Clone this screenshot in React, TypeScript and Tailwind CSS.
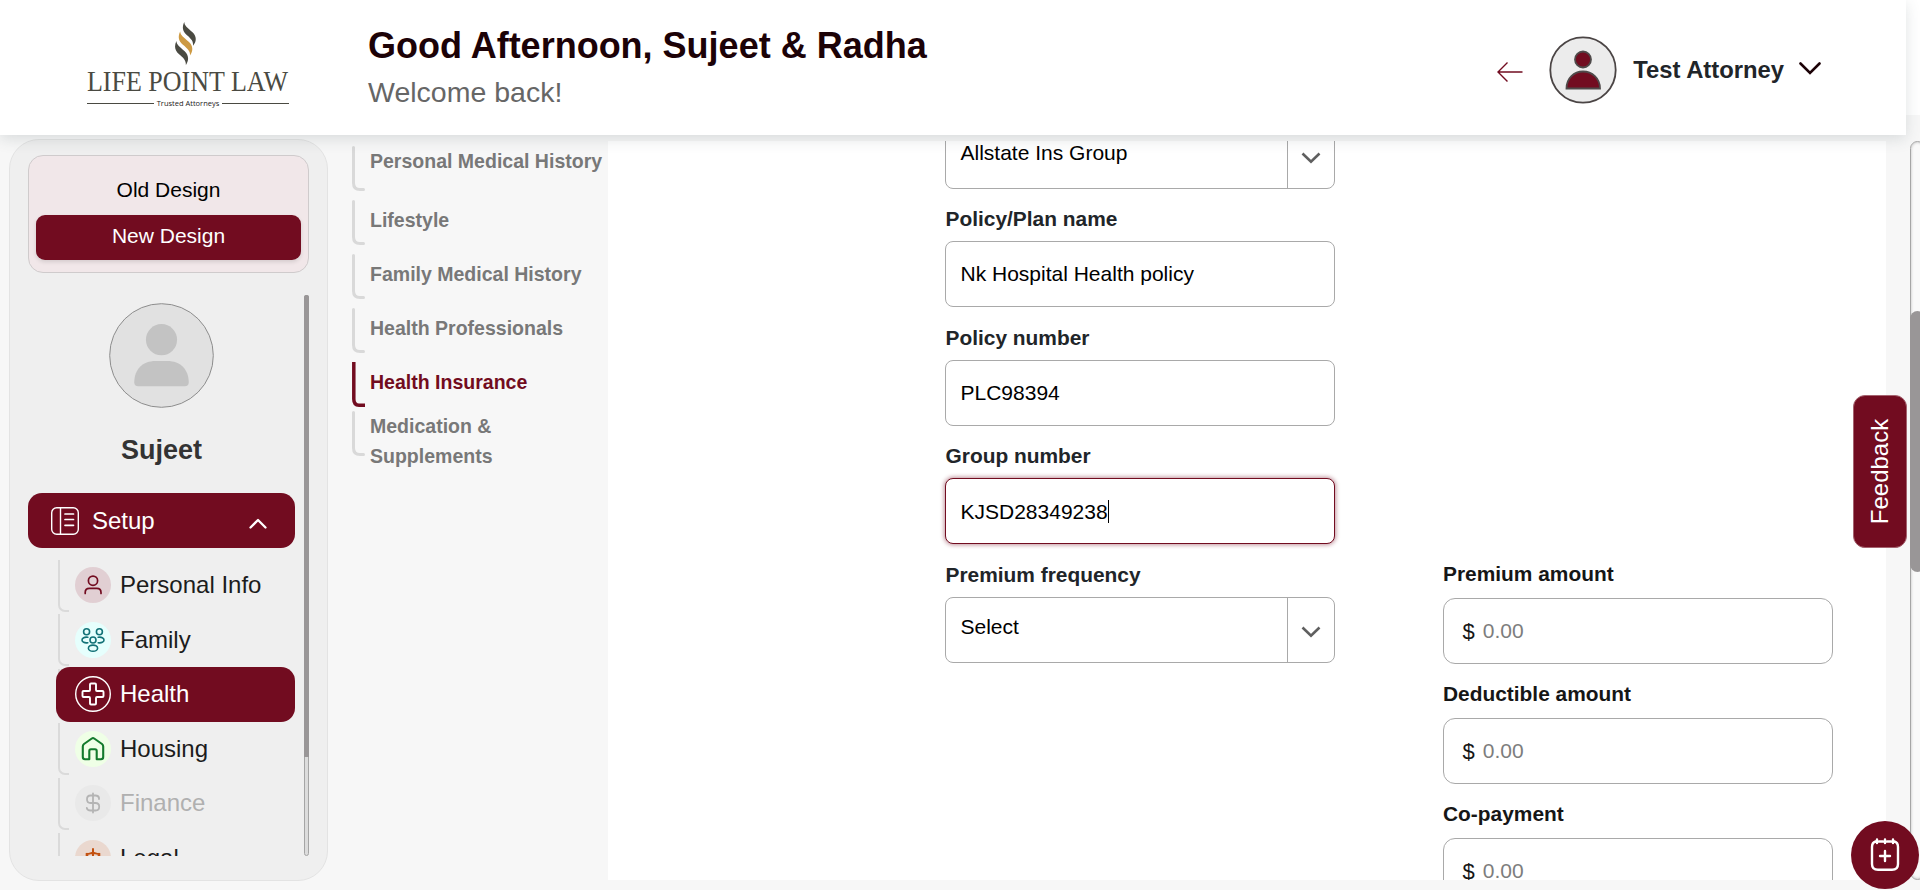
import React from "react";

function Flame() {
  return (
    <svg width="22" height="44" viewBox="0 0 22 44" className="block">
      <path d="M9.300 0C6.800 5 7.500 9.500 12 13.200C16.500 17 18.500 19.500 18 23.800C21.800 19.500 21.800 14.500 17.500 10.300C12.500 5.800 9.600 4 9.300 0Z" fill="#4a4a42" />
      <path d="M5.200 9.500C2.700 14.500 3.400 19 7.900 22.700C12.400 26.500 15.500 29 15 33.500C18.300 29 18.300 24 13.700 19.800C8.700 15.300 5.500 13.500 5.200 9.500Z" fill="#cd9a43" />
      <path d="M1.400 19C-0.900 24 -0.400 28.500 4.100 32.200C8.600 36 11.300 38.500 10.800 43.200C14 38.500 14 33.500 9.700 29.300C4.700 24.800 1.700 23 1.400 19Z" fill="#4a4a42" />
    </svg>
  );
}

function Logo() {
  return (
    <div className="mt-[22px] ml-[87px] flex w-[202px] shrink-0 flex-col items-center">
      <div className="pr-[4px]">
        <Flame />
      </div>
      <svg width="204" height="28" viewBox="0 0 204 28" className="block overflow-visible">
        <text x="1" y="24.500" textLength="201" lengthAdjust="spacingAndGlyphs" fontFamily="Liberation Serif" fontSize="28.500" fill="#4a4a42">LIFE POINT LAW</text>
      </svg>
      <div className="mt-[3px] flex w-full items-center justify-between">
        <span className="h-px w-[67px] bg-[#4a4a42]" />
        <span className="font-['Open_Sans',sans-serif] text-[7.500px] leading-3 text-[#222]">Trusted Attorneys</span>
        <span className="h-px w-[67px] bg-[#4a4a42]" />
      </div>
    </div>
  );
}

function Header() {
  return (
    <header className="relative z-10 flex h-[135px] w-[1906px] shrink-0 bg-white shadow-[0_4px_14px_rgba(60,80,90,0.16)]">
      <Logo />
      <div className="ml-[79px] flex flex-1 flex-col pt-[25px]">
        <h1 className="text-[36px] leading-[42px] font-bold text-[#1c0207]">Good Afternoon, Sujeet &amp; Radha</h1>
        <p className="mt-[9px] text-[28.500px] leading-8 text-[#666]">Welcome back!</p>
      </div>
      <div className="flex h-[140px] items-center pr-[85px]">
        <svg width="26" height="20" viewBox="0 0 26 20" fill="none" stroke="#720c20" strokeWidth="1.400" className="mt-[4px]">
          <path d="M25.500 10H1M10.500 0.500L1 10L10.500 19.500" />
        </svg>
        <svg width="68" height="68" viewBox="0 0 68 68" className="ml-[26px]">
          <circle cx="34" cy="34" r="32.700" fill="#ececec" stroke="#4b4545" strokeWidth="1.800" />
          <circle cx="34" cy="23.500" r="8" fill="#720c20" stroke="#4f4a4a" strokeWidth="1.800" />
          <path d="M17.500 52.500C17.500 42 25 35.500 34 35.500S51 42 51 52.500Z" fill="#720c20" stroke="#4f4a4a" strokeWidth="1.800" />
        </svg>
        <span className="ml-4 text-[23.800px] leading-7 font-bold text-[#212529]">Test Attorney</span>
        <svg width="22" height="13" viewBox="0 0 22 13" fill="none" stroke="#1c0207" strokeWidth="2.600" strokeLinecap="round" className="-mt-[3px] ml-[15px]">
          <path d="M1.500 1.500L11 11L20.500 1.500" />
        </svg>
      </div>
    </header>
  );
}

const icons: Record<string, React.ReactNode> = {
  person: (
    <g stroke="#720c20" strokeWidth="1.700" strokeLinecap="round">
      <circle cx="18" cy="13.700" r="4.600" />
      <path d="M10.200 26.500V25.500Q10.200 21.300 14.400 21.300H21.800Q26 21.300 26 25.500V26.500" />
    </g>
  ),
  family: (
    <g stroke="#127277" strokeWidth="1.600" strokeLinecap="round">
      <circle cx="11.600" cy="9.800" r="3" />
      <circle cx="24.400" cy="9.800" r="3" />
      <circle cx="18" cy="18" r="3" />
      <ellipse cx="18" cy="26.200" rx="4.600" ry="3.100" />
      <path d="M12.800 15.300C9.500 14.700 7 16 7 18S9.500 21.300 12.800 20.700M23.200 15.300C26.500 14.700 29 16 29 18S26.500 21.300 23.200 20.700" />
    </g>
  ),
  health: (
    <g stroke="#fff">
      <circle cx="18" cy="18" r="17.300" strokeWidth="1.400" />
      <path strokeWidth="1.900" strokeLinejoin="round" d="M15 8.500Q15 7.500 16 7.500H20Q21 7.500 21 8.500V14Q21 15 22 15H27.500Q28.500 15 28.500 16V20Q28.500 21 27.500 21H22Q21 21 21 22V27.500Q21 28.500 20 28.500H16Q15 28.500 15 27.500V22Q15 21 14 21H8.500Q7.500 21 7.500 20V16Q7.500 15 8.500 15H14Q15 15 15 14Z" />
    </g>
  ),
  house: (
    <path stroke="#137a2c" strokeWidth="2.100" strokeLinejoin="round" d="M7.800 15.500Q7.800 14 9 13L16.800 7.500Q18 6.700 19.200 7.500L27 13Q28.200 14 28.200 15.500V26Q28.200 28.200 26 28.200H21.700V20Q21.700 18.300 20 18.300H16Q14.300 18.300 14.300 20V28.200H10Q7.800 28.200 7.800 26Z" />
  ),
  dollar: (
    <path stroke="#b4b4b4" strokeWidth="1.800" strokeLinecap="round" d="M18 8.500V27.500M24 14V13Q23.500 10.500 20.500 10.500H15.500Q12 10.500 12 14.200T15.500 18H20.500Q24.200 18 24.200 21.700T20.500 25.500H15.500Q12.200 25.500 11.800 22.800" />
  ),
  legal: (
    <path stroke="#c2500f" strokeWidth="2" strokeLinecap="round" d="M18 9V27M11.500 14C14 14.300 16 12.800 18 12.800S22 14.300 24.500 14M12 15L9 22H15ZM24 15L21 22H27Z" />
  ),
};

function NavItem({ icon, label, circle, active, muted }: { icon: string; label: string; circle: string; active?: boolean; muted?: boolean }) {
  return (
    <div className="flex h-[54.600px] shrink-0">
      <span className="mt-[2px] -mr-[13px] ml-[2px] h-[52px] w-[11px] shrink-0 rounded-bl-[7px] border-b-2 border-l-2 border-[#dadada]" />
      <div className={`relative flex h-[55px] w-[239px] items-center rounded-[14px] pl-[19px] ${active ? "bg-[#720c20]" : ""}`}>
        <span className={`size-9 rounded-full ${circle}`}>
          <svg width="36" height="36" viewBox="0 0 36 36" fill="none">{icons[icon]}</svg>
        </span>
        <span className={`ml-[9px] text-[24px] leading-7 ${active ? "text-white" : muted ? "text-[#b0b0b0]" : "text-[#1c1c1c]"}`}>{label}</span>
      </div>
    </div>
  );
}

function Sidebar() {
  return (
    <aside className="mt-1 ml-[9px] flex h-[742px] w-[319px] shrink-0 flex-col rounded-[30px] border border-[#e3e3e3] bg-[#efefef] pt-[15px] pl-[18px]">
      <div className="flex h-[118px] w-[281px] shrink-0 flex-col items-center rounded-[15px] border border-[#cfcbcc] bg-[#f1e7e9] pt-[14px] text-[21px]">
        <div className="flex h-[45px] w-[265px] items-center justify-center pb-[6px] text-black">Old Design</div>
        <div className="flex h-[45px] w-[265px] items-center justify-center rounded-[9px] bg-[#720c20] pb-[4px] text-white shadow-[0_2px_4px_rgba(0,0,0,0.12)]">New Design</div>
      </div>
      <div className="mt-[22px] flex h-[561px]">
        <div className="flex h-[561px] w-[267px] flex-col overflow-hidden">
          <svg width="105" height="105" viewBox="0 0 106 106" className="mt-2 mr-px shrink-0 self-center">
            <circle cx="53" cy="53" r="52.300" fill="#e1e1e1" stroke="#8c8c8c" />
            <circle cx="53" cy="37" r="15.700" fill="#c3c3c3" />
            <path d="M25.500 80C25.500 67 34 58.500 47 58.500H59C72 58.500 80.500 67 80.500 80Q80.500 84 76.500 84H29.500Q25.500 84 25.500 80Z" fill="#c3c3c3" />
          </svg>
          <div className="mt-[26px] text-center text-[27px] leading-8 font-bold text-[#333]">Sujeet</div>
          <div className="mt-[27px] flex h-[55px] shrink-0 items-center rounded-[14px] bg-[#720c20] pl-[23px] text-[24px] text-white">
            <svg width="28" height="28" viewBox="0 0 28 28" fill="none" stroke="#fff">
              <rect x="0.700" y="0.700" width="26.600" height="26.600" rx="5" strokeWidth="1.400" />
              <path d="M9.500 1V27" strokeWidth="1.400" />
              <path d="M14 7H22.500M14 12.500H22.500M14 18.300H22.500" strokeWidth="1.700" strokeLinecap="round" />
            </svg>
            <span className="ml-[13px] flex-1">Setup</span>
            <svg width="18" height="11" viewBox="0 0 18 11" fill="none" stroke="#fff" strokeWidth="2.300" strokeLinecap="round" strokeLinejoin="round" className="mt-[6px] mr-7">
              <path d="M1.500 9.500L9 2L16.500 9.500" />
            </svg>
          </div>
          <div className="mt-[9.600px] flex flex-col pl-7">
            <NavItem icon="person" label="Personal Info" circle="bg-[#e1cfd3]" />
            <NavItem icon="family" label="Family" circle="bg-[#e6fffd]" />
            <NavItem icon="health" label="Health" circle="" active />
            <NavItem icon="house" label="Housing" circle="bg-[#efffe6]" />
            <NavItem icon="dollar" label="Finance" circle="bg-[#e9e9e9]" muted />
            <NavItem icon="legal" label="Legal" circle="bg-[#ead8cf]" />
          </div>
        </div>
        <div className="ml-[9px] h-[561px] w-[5px] rounded-[3px] border border-[#a5a5a5] bg-[#dcdcdc]">
          <div className="-mx-px -mt-px h-[462px] w-[5px] rounded-t-[2px] bg-[#999697]" />
        </div>
      </div>
    </aside>
  );
}

function SubItem({ label, active, size }: { label: string; active?: boolean; size: string }) {
  return (
    <div className={`flex shrink-0 ${size}`}>
      <svg width="13" height="45" viewBox="0 0 13 45" fill="none" stroke={active ? "#720c20" : "#d9d9d9"} strokeWidth={active ? 3.5 : 3} strokeLinecap={active ? "butt" : "round"} className="shrink-0">
        <path d={active ? "M1.800 0V37Q1.800 43.200 7 43.200H13" : "M1.500 1.500V37Q1.500 43.500 8 43.500H11.500"} />
      </svg>
      <span className={`ml-[5px] text-[19.520px] leading-[30px] font-bold ${active ? "text-[#720c20]" : "text-[#787878]"}`}>{label}</span>
    </div>
  );
}

function SubMenu() {
  return (
    <nav className="mt-[11px] ml-[24px] flex w-[256px] shrink-0 flex-col">
      <SubItem label="Personal Medical History" size="h-[54px] [&>span]:whitespace-nowrap" />
      <SubItem label="Lifestyle" size="h-[54px] [&>span]:mt-[5px]" />
      <SubItem label="Family Medical History" size="h-[54px] [&>span]:mt-[5px]" />
      <SubItem label="Health Professionals" size="h-[54px] [&>span]:mt-[5px]" />
      <SubItem label="Health Insurance" size="h-[49px] [&>span]:mt-[5px]" active />
      <SubItem label="Medication & Supplements" size="h-[60px] w-[150px]" />
    </nav>
  );
}

function Label({ children, dark }: { children: React.ReactNode; dark?: boolean }) {
  return <label className={`block text-[20.900px] leading-[30px] font-bold ${dark ? "text-[#161616]" : "pl-[0.500px] text-[#212529]"}`}>{children}</label>;
}

function SelectBox({ value }: { value: string }) {
  return (
    <div className="flex h-[66px] w-[390px] shrink-0 rounded-[8px] border border-[#a9a9a9] bg-white text-[21px] text-black">
      <span className="flex-1 pt-[14px] pl-[14.500px] leading-[30px]">{value}</span>
      <span className="flex w-[47px] items-center justify-center border-l border-[#a9a9a9] pt-[3px]">
        <svg width="20" height="12" viewBox="0 0 20 12" fill="none" stroke="#5f5f5f" strokeWidth="2.600">
          <path d="M1.500 1.500L10 9.700L18.500 1.500" />
        </svg>
      </span>
    </div>
  );
}

function TextField({ label, value, focused }: { label: string; value: string; focused?: boolean }) {
  return (
    <div className="h-[118.700px] shrink-0">
      <Label>{label}</Label>
      <div className={`mt-[7px] flex h-[66px] w-[390px] items-center rounded-[8px] border bg-white pl-[14.500px] text-[21px] text-black ${focused ? "border-[#720c20] shadow-[0_0_4px_1px_rgba(114,12,32,0.45)]" : "border-[#a9a9a9]"}`}>
        {value}
        {focused && <span className="h-[23px] w-px bg-black" />}
      </div>
    </div>
  );
}

function MoneyField({ label }: { label: string }) {
  return (
    <div className="h-[120px] shrink-0">
      <Label dark>{label}</Label>
      <div className="mt-[9px] flex h-[66px] w-[390px] items-center rounded-[12px] border border-[#a9a9a9] bg-white pl-[18.500px]">
        <span className="text-[22px] text-[#161616]">$</span>
        <span className="ml-[8px] text-[21px] text-[#7d7d7d]">0.00</span>
      </div>
    </div>
  );
}

function FormPanel() {
  return (
    <main className="mt-[6px] flex h-[739px] w-[1278px] shrink-0 overflow-hidden bg-white">
      <div className="-mt-[18px] ml-[337px] flex w-[390px] shrink-0 flex-col">
        <SelectBox value="Allstate Ins Group" />
        <div className="mt-[15px] flex flex-col">
          <TextField label="Policy/Plan name" value="Nk Hospital Health policy" />
          <TextField label="Policy number" value="PLC98394" />
          <TextField label="Group number" value="KJSD28349238" focused />
          <Label>Premium frequency</Label>
          <div className="mt-[7px]">
            <SelectBox value="Select" />
          </div>
        </div>
      </div>
      <div className="ml-[108px] flex flex-col pt-[418px]">
        <MoneyField label="Premium amount" />
        <MoneyField label="Deductible amount" />
        <MoneyField label="Co-payment" />
      </div>
    </main>
  );
}

export default function App() {
  return (
    <div className="relative flex h-[890px] w-full flex-col overflow-hidden bg-[linear-gradient(to_bottom,#fff_115px,#f7f7f7_115px)] font-['Liberation_Sans',Arial,sans-serif]">
      <Header />
      <div className="flex h-[755px] items-start">
        <Sidebar />
        <SubMenu />
        <FormPanel />
        <div className="mt-[6px] ml-6 h-[739px] w-[15px] shrink-0 rounded-[8px] border border-[#a5a5a5] bg-[#f9f9f9] shadow-[inset_0_0_3px_rgba(0,0,0,0.25)]">
          <div className="mt-[169px] -ml-px h-[261px] w-[15px] rounded-[8px] bg-[#999697]" />
        </div>
      </div>
      <div className="absolute top-[395px] left-[1853px] z-20 flex h-[153px] w-[54px] items-center justify-center rounded-[12px] border border-[#a5636f] bg-[#720c20]">
        <span className="-rotate-90 pl-px text-[24px] leading-none whitespace-nowrap text-white">Feedback</span>
      </div>
      <div className="absolute top-[821px] left-[1851px] z-20 flex size-[68px] items-center justify-center rounded-full bg-[#720c20]">
        <svg width="30" height="34" viewBox="0 0 30 34" fill="none" stroke="#fff" strokeWidth="2.400" strokeLinecap="round">
          <path d="M5.500 3.500Q2 4.500 2 9V26Q2 31.800 8 31.800H22Q28 31.800 28 26V9Q28 4.500 24.500 3.500M9 3.500H13M17 3.500H21M7 1.500V5M15 1.500V5M23 1.500V5" />
          <path d="M15 13V23M10 18H20" />
        </svg>
      </div>
    </div>
  );
}
